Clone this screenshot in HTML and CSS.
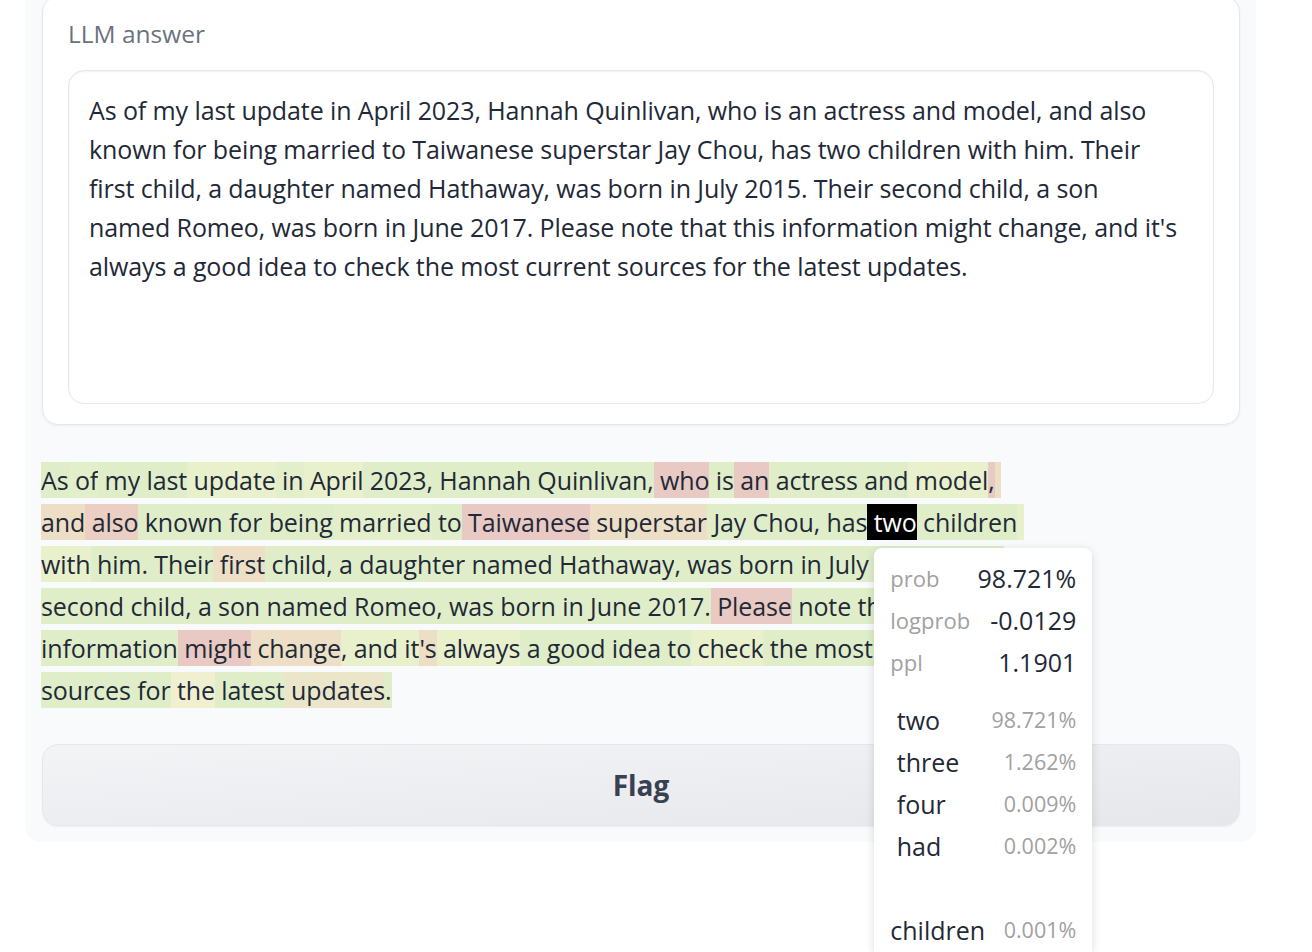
FILE: index.html
```html
<!DOCTYPE html>
<html lang="en">
<head>
<meta charset="utf-8">
<title>LLM answer</title>
<link rel="stylesheet" href="styles.css">
</head>
<body>
<div class="page">
  <div class="panel">
    <div class="card">
      <div class="label">LLM answer</div>
      <div class="answer">As of my last update in April 2023, Hannah Quinlivan, who is an actress and model, and also<br>known for being married to Taiwanese superstar Jay Chou, has two children with him. Their<br>first child, a daughter named Hathaway, was born in July 2015. Their second child, a son<br>named Romeo, was born in June 2017. Please note that this information might change, and it's<br>always a good idea to check the most current sources for the latest updates.</div>
    </div>

    <div class="tokens"><span class="tok g">As</span><span class="tok g2"> of</span><span class="tok g"> my</span><span class="tok g"> last</span><span class="tok y"> update</span><span class="tok g2"> in</span><span class="tok y"> April</span><span class="tok g"> 2023</span><span class="tok g">,</span><span class="tok g"> Hannah</span><span class="tok g"> Quin</span><span class="tok g">livan</span><span class="tok g">,</span><span class="tok p"> who</span><span class="tok g"> is</span><span class="tok p"> an</span><span class="tok g"> actress</span><span class="tok g"> and</span><span class="tok y"> model</span><span class="tok p">,</span><span class="tok t">&nbsp;</span><br><span class="tok t">and</span><span class="tok pt"> also</span><span class="tok g"> known</span><span class="tok g"> for</span><span class="tok g"> being</span><span class="tok g2"> married</span><span class="tok g"> to</span><span class="tok p"> Taiwanese</span><span class="tok t"> superstar</span><span class="tok g"> Jay</span><span class="tok g"> Chou</span><span class="tok g">,</span><span class="tok g"> has</span><span class="tok sel"> two<span class="tip">
        <span class="trow"><span class="k">prob</span><span class="v">98.721%</span></span>
        <span class="trow"><span class="k">logprob</span><span class="v">-0.0129</span></span>
        <span class="trow"><span class="k">ppl</span><span class="v">1.1901</span></span>
        <span class="gap"></span>
        <span class="trow"><span class="c"> two</span><span class="cp">98.721%</span></span>
        <span class="trow"><span class="c"> three</span><span class="cp">1.262%</span></span>
        <span class="trow"><span class="c"> four</span><span class="cp">0.009%</span></span>
        <span class="trow"><span class="c"> had</span><span class="cp">0.002%</span></span>
        <span class="trow"></span>
        <span class="trow"><span class="c">children</span><span class="cp">0.001%</span></span>
      </span></span><span class="tok g"> children</span><span class="tok y">&nbsp;</span><br><span class="tok y">with</span><span class="tok g"> him</span><span class="tok g">.</span><span class="tok g"> Their</span><span class="tok t"> first</span><span class="tok g"> child</span><span class="tok g">,</span><span class="tok g"> a</span><span class="tok g"> daughter</span><span class="tok g"> named</span><span class="tok g"> Hathaway</span><span class="tok g">,</span><span class="tok g"> was</span><span class="tok g"> born</span><span class="tok g"> in</span><span class="tok g"> July</span><span class="tok g"> 2015</span><span class="tok g">.</span><span class="tok g"> Their</span><br><span class="tok g">second</span><span class="tok g"> child</span><span class="tok g">,</span><span class="tok g"> a</span><span class="tok g"> son</span><span class="tok g"> named</span><span class="tok g"> Romeo</span><span class="tok g">,</span><span class="tok g"> was</span><span class="tok g"> born</span><span class="tok g"> in</span><span class="tok g"> June</span><span class="tok g"> 2017</span><span class="tok g">.</span><span class="tok p"> Please</span><span class="tok g"> note</span><span class="tok g"> that</span><span class="tok g"> this</span><br><span class="tok g">information</span><span class="tok p"> might</span><span class="tok t"> change</span><span class="tok y">,</span><span class="tok y"> and</span><span class="tok y"> it</span><span class="tok t">'s</span><span class="tok y"> always</span><span class="tok g"> a</span><span class="tok g"> good</span><span class="tok g"> idea</span><span class="tok g"> to</span><span class="tok y"> check</span><span class="tok g"> the</span><span class="tok g"> most</span><span class="tok g"> current</span><br><span class="tok g">sources</span><span class="tok g"> for</span><span class="tok y2"> the</span><span class="tok g"> latest</span><span class="tok t2"> updates</span><span class="tok g">.</span></div>

    <button class="flag" type="button">Flag</button>
  </div>
</div>
</body>
</html>
```

FILE: styles.css
```css
* { box-sizing: border-box; }
html, body { margin: 0; padding: 0; }
html { min-height: 100%; }
body {
  min-height: 100vh;
  background: #ffffff;
  font-family: "Open Sans", Lato, sans-serif;
  color: #1f2937;
}
.page { padding-left: 25px; }
.panel {
  width: 1231px;
  margin-top: -20px;
  background: #f9fafb;
  border-radius: 0 0 16px 16px;
  padding: 16px 16px 16px 17px;
  display: flex;
  flex-direction: column;
}
.card {
  background: #ffffff;
  border: 1px solid #e5e7eb;
  border-radius: 16px;
  padding: 22px 25px 20px;
  box-shadow: 0 1px 3px rgba(0, 0, 0, 0.05);
}
.label {
  font-size: 24.5px;
  line-height: 30px;
  color: #6b7280;
  margin-bottom: 21px;
}
.answer {
  height: 334px;
  border: 1px solid #e5e7eb;
  border-radius: 16px;
  padding: 20px 20px;
  font-size: 25px;
  letter-spacing: -0.1px;
  line-height: 39px;
  color: #1f2937;
  box-shadow: inset 0 1px 2px rgba(0, 0, 0, 0.06);
}
.tokens {
  margin-top: 34px;
  margin-left: -1px;
  font-size: 25px;
  letter-spacing: -0.1px;
  line-height: 42px;
  color: #1f2937;
}
.tok { padding: 1px 0; }
.g { background: #dfeec9; }
.g2 { background: #e3efca; }
.y { background: #e9f0cc; }
.y2 { background: #f0efd0; }
.t { background: #ecdfc6; }
.t2 { background: #ebe6c9; }
.p { background: #e8c9c4; }
.pt { background: #eacfc2; }
.sel {
  background: #000000;
  color: #ffffff;
  position: relative;
}
.tip {
  position: absolute;
  left: 7px;
  top: calc(100% + 8px);
  z-index: 10;
  display: block;
  width: 218px;
  height: 404px;
  padding: 9px 16px;
  background: #ffffff;
  border-radius: 8px 8px 0 0;
  box-shadow: 0 2px 10px rgba(0, 0, 0, 0.14);
  color: #1f2937;
  font-size: 25px;
  letter-spacing: 0;
  line-height: 42px;
}
.trow {
  display: flex;
  justify-content: space-between;
  align-items: center;
  height: 42px;
}
.gap { display: block; height: 16px; }
.k { color: #a1a1a1; font-size: 22px; }
.v { color: #1f2937; }
.c { white-space: pre; color: #1f2937; }
.cp { color: #a1a1a1; font-size: 21.5px; }
.flag {
  margin-top: 33px;
  height: 82px;
  width: 100%;
  border: 1px solid #e5e7eb;
  border-radius: 16px;
  background: linear-gradient(to bottom right, #f3f4f6, #e6e7eb);
  box-shadow: 0 1px 2px rgba(0, 0, 0, 0.05);
  font-family: "Open Sans", Lato, sans-serif;
  font-weight: 700;
  font-size: 28px;
  color: #374151;
  display: flex;
  align-items: center;
  justify-content: center;
}
```
